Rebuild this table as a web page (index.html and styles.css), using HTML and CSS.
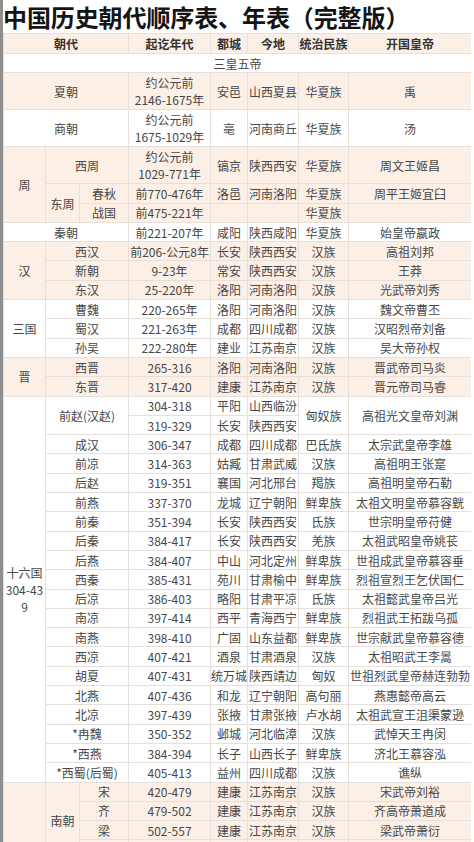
FILE: index.html
```html
<!DOCTYPE html>
<html lang="zh">
<head>
<meta charset="utf-8">
<title>中国历史朝代顺序表、年表</title>
<link rel="stylesheet" href="styles.css">
</head>
<body>
<div class="page">
  <h1 class="title">中国历史朝代顺序表、年表（完整版）</h1>
  <table class="chart">
    <colgroup>
      <col class="c-a"><col class="c-b"><col class="c-c"><col class="c-d"><col class="c-e"><col class="c-f"><col class="c-g"><col class="c-h">
    </colgroup>
    <tr class="pk head">
      <th colspan="3">朝代</th><th>起讫年代</th><th>都城</th><th>今地</th><th>统治民族</th><th>开国皇帝</th>
    </tr>
    <tr><td colspan="8">三皇五帝</td></tr>
    <tr class="pk tall">
      <td colspan="3">夏朝</td><td>约公元前<br>2146-1675年</td><td>安邑</td><td>山西夏县</td><td>华夏族</td><td>禹</td>
    </tr>
    <tr class="tall">
      <td colspan="3">商朝</td><td>约公元前<br>1675-1029年</td><td>亳</td><td>河南商丘</td><td>华夏族</td><td>汤</td>
    </tr>
    <tr class="pk tall">
      <td rowspan="3">周</td><td colspan="2">西周</td><td>约公元前<br>1029-771年</td><td>镐京</td><td>陕西西安</td><td>华夏族</td><td>周文王姬昌</td>
    </tr>
    <tr class="pk">
      <td rowspan="2">东周</td><td>春秋</td><td>前770-476年</td><td>洛邑</td><td>河南洛阳</td><td>华夏族</td><td>周平王姬宜臼</td>
    </tr>
    <tr class="pk">
      <td>战国</td><td>前475-221年</td><td></td><td></td><td>华夏族</td><td></td>
    </tr>
    <tr>
      <td colspan="3">秦朝</td><td>前221-207年</td><td>咸阳</td><td>陕西咸阳</td><td>华夏族</td><td>始皇帝嬴政</td>
    </tr>
    <tr class="pk">
      <td rowspan="3">汉</td><td colspan="2">西汉</td><td>前206-公元8年</td><td>长安</td><td>陕西西安</td><td>汉族</td><td>高祖刘邦</td>
    </tr>
    <tr class="pk">
      <td colspan="2">新朝</td><td>9-23年</td><td>常安</td><td>陕西西安</td><td>汉族</td><td>王莽</td>
    </tr>
    <tr class="pk">
      <td colspan="2">东汉</td><td>25-220年</td><td>洛阳</td><td>河南洛阳</td><td>汉族</td><td>光武帝刘秀</td>
    </tr>
    <tr>
      <td rowspan="3">三国</td><td colspan="2">曹魏</td><td>220-265年</td><td>洛阳</td><td>河南洛阳</td><td>汉族</td><td>魏文帝曹丕</td>
    </tr>
    <tr>
      <td colspan="2">蜀汉</td><td>221-263年</td><td>成都</td><td>四川成都</td><td>汉族</td><td>汉昭烈帝刘备</td>
    </tr>
    <tr>
      <td colspan="2">孙吴</td><td>222-280年</td><td>建业</td><td>江苏南京</td><td>汉族</td><td>吴大帝孙权</td>
    </tr>
    <tr class="pk">
      <td rowspan="2">晋</td><td colspan="2">西晋</td><td>265-316</td><td>洛阳</td><td>河南洛阳</td><td>汉族</td><td>晋武帝司马炎</td>
    </tr>
    <tr class="pk">
      <td colspan="2">东晋</td><td>317-420</td><td>建康</td><td>江苏南京</td><td>汉族</td><td>晋元帝司马睿</td>
    </tr>
    <tr>
      <td rowspan="20" class="group">十六国<br>304-43<br>9</td><td colspan="2" rowspan="2">前赵(汉赵)</td><td>304-318</td><td>平阳</td><td>山西临汾</td><td rowspan="2">匈奴族</td><td rowspan="2">高祖光文皇帝刘渊</td>
    </tr>
    <tr>
      <td>319-329</td><td>长安</td><td>陕西西安</td>
    </tr>
    <tr><td colspan="2">成汉</td><td>306-347</td><td>成都</td><td>四川成都</td><td>巴氐族</td><td>太宗武皇帝李雄</td></tr>
    <tr><td colspan="2">前凉</td><td>314-363</td><td>姑臧</td><td>甘肃武威</td><td>汉族</td><td>高祖明王张寔</td></tr>
    <tr><td colspan="2">后赵</td><td>319-351</td><td>襄国</td><td>河北邢台</td><td>羯族</td><td>高祖明皇帝石勒</td></tr>
    <tr><td colspan="2">前燕</td><td>337-370</td><td>龙城</td><td>辽宁朝阳</td><td>鲜卑族</td><td>太祖文明皇帝慕容皝</td></tr>
    <tr><td colspan="2">前秦</td><td>351-394</td><td>长安</td><td>陕西西安</td><td>氐族</td><td>世宗明皇帝苻健</td></tr>
    <tr><td colspan="2">后秦</td><td>384-417</td><td>长安</td><td>陕西西安</td><td>羌族</td><td>太祖武昭皇帝姚苌</td></tr>
    <tr><td colspan="2">后燕</td><td>384-407</td><td>中山</td><td>河北定州</td><td>鲜卑族</td><td>世祖成武皇帝慕容垂</td></tr>
    <tr><td colspan="2">西秦</td><td>385-431</td><td>苑川</td><td>甘肃榆中</td><td>鲜卑族</td><td>烈祖宣烈王乞伏国仁</td></tr>
    <tr><td colspan="2">后凉</td><td>386-403</td><td>略阳</td><td>甘肃平凉</td><td>氐族</td><td>太祖懿武皇帝吕光</td></tr>
    <tr><td colspan="2">南凉</td><td>397-414</td><td>西平</td><td>青海西宁</td><td>鲜卑族</td><td>烈祖武王拓跋乌孤</td></tr>
    <tr><td colspan="2">南燕</td><td>398-410</td><td>广固</td><td>山东益都</td><td>鲜卑族</td><td>世宗献武皇帝慕容德</td></tr>
    <tr><td colspan="2">西凉</td><td>407-421</td><td>酒泉</td><td>甘肃酒泉</td><td>汉族</td><td>太祖昭武王李暠</td></tr>
    <tr><td colspan="2">胡夏</td><td>407-431</td><td>统万城</td><td>陕西靖边</td><td>匈奴</td><td>世祖烈武皇帝赫连勃勃</td></tr>
    <tr><td colspan="2">北燕</td><td>407-436</td><td>和龙</td><td>辽宁朝阳</td><td>高句丽</td><td>燕惠懿帝高云</td></tr>
    <tr><td colspan="2">北凉</td><td>397-439</td><td>张掖</td><td>甘肃张掖</td><td>卢水胡</td><td>太祖武宣王沮渠蒙逊</td></tr>
    <tr><td colspan="2">*冉魏</td><td>350-352</td><td>邺城</td><td>河北临漳</td><td>汉族</td><td>武悼天王冉闵</td></tr>
    <tr><td colspan="2">*西燕</td><td>384-394</td><td>长子</td><td>山西长子</td><td>鲜卑族</td><td>济北王慕容泓</td></tr>
    <tr><td colspan="2">*西蜀(后蜀)</td><td>405-413</td><td>益州</td><td>四川成都</td><td>汉族</td><td>谯纵</td></tr>
    <tr class="pk">
      <td rowspan="10"></td><td rowspan="4">南朝</td><td>宋</td><td>420-479</td><td>建康</td><td>江苏南京</td><td>汉族</td><td>宋武帝刘裕</td>
    </tr>
    <tr class="pk"><td>齐</td><td>479-502</td><td>建康</td><td>江苏南京</td><td>汉族</td><td>齐高帝萧道成</td></tr>
    <tr class="pk"><td>梁</td><td>502-557</td><td>建康</td><td>江苏南京</td><td>汉族</td><td>梁武帝萧衍</td></tr>
    <tr class="pk"><td></td><td></td><td></td><td></td><td></td><td></td></tr>
  </table>
</div>
</body>
</html>
```

FILE: styles.css
```css
html, body {
  margin: 0;
  padding: 0;
  background: #ffffff;
}

body {
  font-family: "Noto Sans CJK SC", "Noto Sans", sans-serif;
  overflow: hidden;
}

.page {
  border-left: 3px solid #8e8e8e;
  width: 471px;
  height: 842px;
  overflow: hidden;
  box-sizing: border-box;
}

.title {
  margin: 0;
  height: 33px;
  font-size: 24px;
  line-height: 33px;
  font-weight: 700;
  color: #141414;
  white-space: nowrap;
  letter-spacing: -0.1px;
}

.chart {
  border-collapse: collapse;
  table-layout: fixed;
  width: 468px;
  font-size: 12px;
  color: #474747;
  text-align: center;
}

.c-a { width: 42px; }
.c-b { width: 34px; }
.c-c { width: 49px; }
.c-d { width: 82px; }
.c-e { width: 37px; }
.c-f { width: 51px; }
.c-g { width: 50px; }
.c-h { width: 123px; }

.chart th,
.chart td {
  border: 1px solid #e6dfda;
  padding: 0;
  height: 18.3px;
  line-height: 17px;
  white-space: nowrap;
  overflow: hidden;
  vertical-align: middle;
}

.chart th {
  height: 19px;
  font-weight: 700;
  color: #333333;
}

.chart .tall td {
  height: 36px;
}

.chart .pk {
  background: #fcefe6;
}

.chart .group {
  white-space: normal;
}
```
